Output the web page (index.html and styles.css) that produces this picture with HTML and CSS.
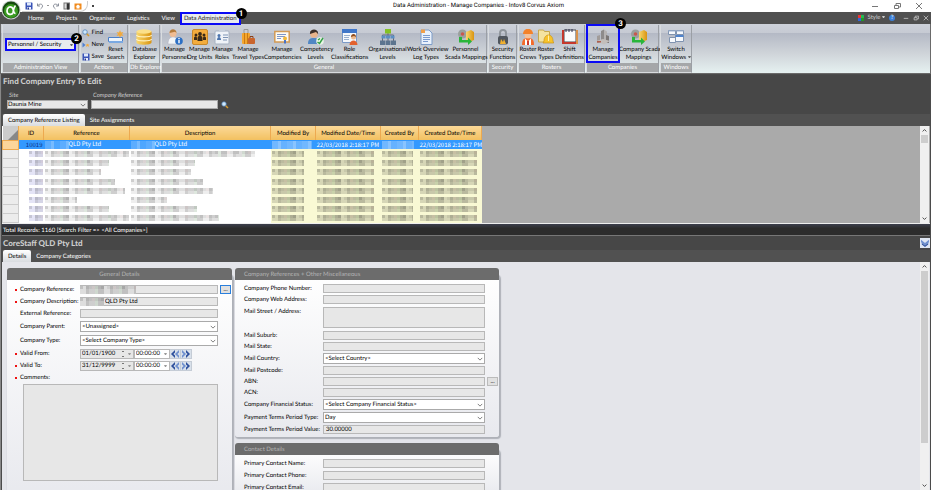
FILE: index.html
```html
<!DOCTYPE html>
<html lang="en">
<head>
    <meta charset="UTF-8">
    <meta name="viewport" content="width=device-width, initial-scale=1.0">
    <title>Data Administration - Manage Companies - Intov8 Corvus Axiom</title>
    <link rel="stylesheet" href="styles.css">
</head>
<body>
    <svg class="sprite" aria-hidden="true">
        <linearGradient id="gold" x1="0" x2="1"><stop offset="0" stop-color="#f9d76b"/><stop offset="1" stop-color="#d99411"/></linearGradient>
        <symbol id="i-save" viewBox="0 0 16 16"><path fill="#3a54b8" d="M1 1h13l1 1v13H1z"/><path fill="#dfe8fa" d="M4 1h8v6H4z"/><path fill="#eef" d="M4 10h8v5H4z"/><path fill="#223a8c" d="M5 11h3v4H5z"/></symbol>
        <symbol id="i-undo" viewBox="0 0 16 16"><path fill="none" stroke="#8a8f9a" stroke-width="2" d="M3 3v5h5M3 8c3-5 10-5 10 0 0 3-2 4-4 6"/></symbol>
        <symbol id="i-redo" viewBox="0 0 16 16"><path fill="none" stroke="#8a8f9a" stroke-width="2" d="M13 3v5H8M13 8C10 3 3 3 3 8c0 3 2 4 4 6"/></symbol>
        <symbol id="i-door" viewBox="0 0 16 16"><path fill="#777" d="M1 1h13v14H1z"/><path fill="#ddd" d="M3 3h4v10H3z"/><path fill="#333" d="M8 3h4v12H8z"/></symbol>
        <symbol id="i-home" viewBox="0 0 16 16"><path fill="#f08a1c" d="M1 3h14v12H1z"/><path fill="#fff" d="M8 5l5 4h-2v4H5V9H3z"/></symbol>
        <symbol id="i-find" viewBox="0 0 16 16"><path stroke="#d79a2b" stroke-width="3" d="M9 9l5 5"/><circle cx="6" cy="6" r="4.500" fill="#cfe8fb" stroke="#4d7fb5" stroke-width="1.500"/></symbol>
        <symbol id="i-new" viewBox="0 0 16 16"><path fill="#4f7fd0" d="M1 3l6 5-6 5z"/><path fill="#f3a93a" d="M11 5l1 2h3l-2 2 1 3-3-2-3 2 1-3-2-2h3z"/></symbol>
        <symbol id="i-reset" viewBox="0 0 16 16"><path fill="#eef4fb" stroke="#4a7fc9" d="M.5 8.500h14v4H.5z"/><path fill="#7aa9e2" d="M1 12h14v2H1z"/><path fill="#f2a93b" d="M12 1l1 2.500 2.500-.5-1.500 2 1.500 2-2.500-.5-1 2.500-1-2.500-2.500.5 1.500-2-1.500-2 2.500.5z"/></symbol>
        <symbol id="i-db" viewBox="0 0 16 16"><path fill="url(#gold)" d="M.5 2.500h15v11c0 3-15 3-15 0z"/><ellipse cx="8" cy="2.500" rx="7.500" ry="2.200" fill="#fbe08a"/><path fill="none" stroke="#fff3c4" stroke-width="1.200" d="M.5 6c0 2.500 15 2.500 15 0M.5 10c0 2.500 15 2.500 15 0"/></symbol>
        <symbol id="i-person" viewBox="0 0 16 16"><path fill="#f2f5f8" stroke="#aab" stroke-width=".5" d="M1 15c0-5 2-7 5-7s6 2 6 7z"/><circle cx="6" cy="4.500" r="3.500" fill="#f0bd94"/><path fill="#b57c3c" d="M2.500 4c0-5 7-5 7 0L8 2.800z"/><circle cx="12" cy="12" r="3.800" fill="#2c6fc4"/><path stroke="#fff" stroke-width="1.400" d="M12 9v1.300M12 11v3.300"/></symbol>
        <symbol id="i-org" viewBox="0 0 16 16"><rect x=".5" y=".5" width="15" height="15" rx="1.500" fill="#f3ac3d" stroke="#c98a2c"/><g fill="#3a2a17"><circle cx="8" cy="5" r="1.900"/><circle cx="4" cy="6" r="1.500"/><circle cx="12" cy="6" r="1.500"/><path d="M5.500 12V9c0-3 5-3 5 0v3zM2 11V9c0-2 3-2 3 0v2zM11 11V9c0-2 3-2 3 0v2z"/></g></symbol>
        <symbol id="i-roles" viewBox="0 0 16 16"><rect x="1" y="2" width="14" height="13" rx="1" fill="#eff3f8" stroke="#a6b2c2"/><path fill="#c6cfdb" d="M5 0h6v3H5z"/><circle cx="5" cy="6.500" r="1.500" fill="#4c74ad"/><path fill="#4c74ad" d="M3 11c0-4 4-4 4 0z"/><path stroke="#7e95b5" d="M9 6h5M9 8.500h5M9 11h4"/></symbol>
        <symbol id="i-travel" viewBox="0 0 16 16"><path fill="none" stroke="#999" d="M4 4V.5h4V4"/><rect x="2" y="4" width="8" height="11" rx="1" fill="#f4a62f"/><path stroke="#c97b13" d="M4.500 4v11M7.500 4v11"/><rect x="8" y="9" width="7" height="6" rx="1" fill="#c9652e"/><path fill="none" stroke="#8b3f18" d="M10 9V7.500h3V9"/></symbol>
        <symbol id="i-cert" viewBox="0 0 16 16"><path fill="#fdfbf3" stroke="#d29a55" stroke-width="1.500" d="M.8 2.500h14.400v10.500H.8z"/><path stroke="#7f97c7" d="M3 5.500h9M3 7.500h8M3 9.500h4"/><circle cx="11" cy="9.500" r="2" fill="#f2b93b"/><path fill="#4a73c4" d="M10 11h2v4l-1-1-1 1z"/></symbol>
        <symbol id="i-comp" viewBox="0 0 16 16"><path fill="#5187c4" d="M0 15c0-5 2-6 6-6s5 2 5 6z"/><circle cx="6" cy="5" r="3.800" fill="#e8b48b"/><path fill="#3c3029" d="M2 5c-1-6 9-6 8 0L8 3z"/><circle cx="12" cy="12" r="3.800" fill="#e9f6e6"/><path fill="none" stroke="#34a047" stroke-width="1.500" d="M9.500 13l2 1.500L15 9M10 11l2-1.500"/></symbol>
        <symbol id="i-class" viewBox="0 0 16 16"><path fill="#f5f8fc" stroke="#7c9ac7" d="M.5.5h14v13H.5z"/><path fill="#3f76c9" d="M0 0h15v4H0z"/><path stroke="#9ab0d0" d="M2 6.500h6M2 8.500h5M2 10.500h5"/><circle cx="11.500" cy="8" r="2.500" fill="#efb98b"/><path fill="#8d4c1e" d="M9 8c0-4 5-4 5 0l-2-1z"/><path fill="#e2612d" d="M7.500 16c0-6 8-6 8 0z"/></symbol>
        <symbol id="i-tree" viewBox="0 0 16 16"><path fill="none" stroke="#667" d="M8 4v8M2.500 12V6h11v6"/><path fill="#84c225" d="M5 0h6v4.500H5z"/><path fill="#5b8fc4" d="M1.500 6.500h4v3h-4zM6 6.500h4v3H6zM10.500 6.500h4v3h-4z"/><path fill="#5c748f" d="M0 11.500h5V16H0zM5.500 11.500h5V16h-5zM11 11.500h5V16h-5z"/></symbol>
        <symbol id="i-doc" viewBox="0 0 16 16"><path fill="#e9f1fc" stroke="#7d9cc8" d="M3 1h8l3 3v11.500H3z"/><path fill="#f0a04c" d="M3 .5h4V4H3z"/><path stroke="#7a9bd0" d="M5 6.500h7M5 8.500h7M5 10.500h7M5 12.500h5"/></symbol>
        <symbol id="i-scada" viewBox="0 0 16 16"><circle cx="4.500" cy="5" r="4.500" fill="#9a9f9d"/><circle cx="4.500" cy="5" r="1.800" fill="#c9574c"/><path fill="url(#gold)" d="M8 3l5-2 3 2v8l-5 2-3-2z"/><path fill="#29b53a" d="M1 8h3v3h6V8.500l4 4-4 3.500v-2.500H1z"/></symbol>
        <symbol id="i-lock" viewBox="0 0 16 16"><path fill="none" stroke="#8f959c" stroke-width="2" d="M5 8V4c0-4 6-4 6 0v4"/><rect x="3" y="7" width="10" height="8.500" rx="2" fill="#50565e"/><path fill="#f0b030" d="M5 15l1-5 2 3 1-3 2 5z"/></symbol>
        <symbol id="i-crew" viewBox="0 0 16 16"><path fill="#f36b2b" d="M2 16c0-6 2-7 6-7s6 1 6 7z"/><path fill="#fff" d="M5 9.500l3 3 3-3v6.500H5z"/><circle cx="8" cy="6" r="3.500" fill="#f4c19b"/><path fill="#f3822b" d="M3 5c0-7 10-7 10 0z"/><path fill="#d03b2a" d="M7 12h2v4H7z"/></symbol>
        <symbol id="i-hat" viewBox="0 0 16 16"><path fill="#f4e3a0" stroke="#c7a84c" d="M.5 1h5l1 1.500h5V13H.5z"/><path fill="#f7c32b" stroke="#c8921a" stroke-width=".7" d="M6 12c0-8 9-8 9 0l.7 2H5z"/><path stroke="#fff0a8" d="M10.500 6.500V12"/></symbol>
        <symbol id="i-shift" viewBox="0 0 16 16"><path fill="#fbfbfb" stroke="#44484f" d="M2 1h12v12H2z"/><path fill="#c5372b" d="M0 13h16v2H0zM0 1h2v14H0z"/><path fill="#d9924a" d="M14 1h2v14h-2z"/><path stroke="#335" d="M4 0v3M7 0v3M10 0v3"/></symbol>
        <symbol id="i-city" viewBox="0 0 16 16"><path fill="#8e8b8b" d="M6 2l3-1.500V14H6z"/><path fill="#b6b3b3" d="M9 .5l3 2V14H9z"/><path fill="#a19c9a" d="M2 7l3-1v8H2z"/><path fill="#7d7877" d="M11 6l3 1v7h-3z"/><path fill="#c3bebb" d="M1 12l7-2 7 2-6 3.500z"/><path fill="#b05d4c" d="M2 12h4v1.500H2z"/></symbol>
        <symbol id="i-switch" viewBox="0 0 16 16"><g fill="#f6f9fd" stroke="#7f93b0"><path d="M.5 1.500h7v4h-7zM8.500 1.500h7v4h-7zM1.500 8.500h6v5h-6z"/><path d="M7.500 6.500h8v6h-8z"/></g><path fill="#4f83cc" d="M7.500 6h8v2h-8z"/><path fill="#9db3d1" d="M.5 1.500h7v1h-7zM8.500 1.500h7v1h-7z"/></symbol>
        <symbol id="i-chev" viewBox="0 0 8 8"><path fill="none" stroke="#555" d="M1 2.500l3 3 3-3"/></symbol>
        <symbol id="i-up" viewBox="0 0 8 8"><path fill="none" stroke="#444" stroke-width="1.500" d="M1 5.500l3-3 3 3"/></symbol>
        <symbol id="i-down" viewBox="0 0 8 8"><path fill="none" stroke="#444" stroke-width="1.500" d="M1 2.500l3 3 3-3"/></symbol>
        <symbol id="i-prev" viewBox="0 0 10 10"><path fill="#2c4f9c" d="M5 0L0 5l5 5V7L3 5l2-2z"/><path fill="#6f90cf" d="M10 0L5 5l5 5V7L8 5l2-2z"/></symbol>
        <symbol id="i-next" viewBox="0 0 10 10"><path fill="#6f90cf" d="M0 0l5 5-5 5V7l2-2-2-2z"/><path fill="#2c4f9c" d="M5 0l5 5-5 5V7l2-2-2-2z"/></symbol>
        <symbol id="i-min" viewBox="0 0 8 8"><path stroke="currentColor" d="M1 4.500h6"/></symbol>
        <symbol id="i-restore" viewBox="0 0 8 8"><path fill="none" stroke="currentColor" d="M1.500 3.500h4v3h-4zM3 3V1.500h4.500V5H6"/></symbol>
        <symbol id="i-close" viewBox="0 0 8 8"><path stroke="currentColor" d="M1 1l6 6M7 1L1 7"/></symbol>
    </svg>

    <header class="titlebar">
        <div class="quick">
            <svg><use href="#i-save"/></svg>
            <svg><use href="#i-undo"/></svg>
            <i class="dot"></i>
            <svg><use href="#i-redo"/></svg>
            <svg><use href="#i-door"/></svg>
            <svg><use href="#i-home"/></svg>
        </div>
        <i class="dot dark"></i>
        <h1>Data Administration - Manage Companies - Intov8 Corvus Axiom</h1>
        <div class="window-buttons">
            <button aria-label="Minimise"><svg><use href="#i-min"/></svg></button>
            <button aria-label="Restore"><svg><use href="#i-restore"/></svg></button>
            <button aria-label="Close"><svg><use href="#i-close"/></svg></button>
        </div>
        <button class="orb" aria-label="Application menu">
            <svg viewBox="0 0 20 20"><circle cx="10" cy="10" r="9.500" fill="#c9cdcf"/><circle cx="10" cy="10" r="8.500" fill="#174a10"/><circle cx="10" cy="11" r="7" fill="#3a9a22"/><path fill="none" stroke="#fff" stroke-width="1.700" d="M14.500 5.500c-2 2-2 5-2.500 7-1 3-6 2.500-6-1.500s3-5 5-3.500 1 6 3.500 6"/></svg>
        </button>
    </header>

    <nav class="menu">
        <a href="#">Home</a>
        <a href="#">Projects</a>
        <a href="#">Organiser</a>
        <a href="#">Logistics</a>
        <a href="#">View</a>
        <a href="#" class="active marked">Data Administration<span class="callout">1</span></a>
        <div class="menu-right">
            <svg viewBox="0 0 8 8"><path fill="#e33" d="M0 0h4v4H0z"/><path fill="#2b5" d="M4 0h4v4H4z"/><path fill="#36d" d="M0 4h4v4H0z"/><path fill="#292" d="M4 4h4v4H4z"/></svg>
            <button>Style <i class="arrow"></i></button>
            <button class="help" aria-label="Help">?</button>
            <button aria-label="Minimise child"><svg><use href="#i-min"/></svg></button>
            <button aria-label="Restore child"><svg><use href="#i-restore"/></svg></button>
            <button aria-label="Close child"><svg><use href="#i-close"/></svg></button>
        </div>
    </nav>

    <div class="ribbon">
        <section class="group g-admin">
            <div class="tools">
                <div class="combo marked">
                    <select aria-label="Administration view"><option>Personnel / Security</option></select>
                    <i class="arrow"></i>
                    <span class="callout">2</span>
                </div>
            </div>
            <h2>Administration View</h2>
        </section>
        <section class="group g-actions">
            <div class="tools">
                <div class="small-tools">
                    <button><svg><use href="#i-find"/></svg>Find</button>
                    <button><svg><use href="#i-new"/></svg>New</button>
                    <button><svg><use href="#i-save"/></svg>Save</button>
                </div>
                <button class="tool"><svg><use href="#i-reset"/></svg>Reset<br>Search</button>
            </div>
            <h2>Actions</h2>
        </section>
        <section class="group g-db">
            <div class="tools">
                <button class="tool"><svg><use href="#i-db"/></svg>Database<br>Explorer</button>
            </div>
            <h2>Db Explorer</h2>
        </section>
        <section class="group g-general">
            <div class="tools">
                <button class="tool"><svg><use href="#i-person"/></svg>Manage<br>Personnel</button>
                <button class="tool"><svg><use href="#i-org"/></svg>Manage<br>Org Units</button>
                <button class="tool"><svg><use href="#i-roles"/></svg>Manage<br>Roles</button>
                <button class="tool"><svg><use href="#i-travel"/></svg>Manage<br>Travel Types</button>
                <button class="tool"><svg><use href="#i-cert"/></svg>Manage<br>Competencies</button>
                <button class="tool"><svg><use href="#i-comp"/></svg>Competency<br>Levels</button>
                <button class="tool"><svg><use href="#i-class"/></svg>Role<br>Classifications</button>
                <button class="tool"><svg><use href="#i-tree"/></svg>Organisational<br>Levels</button>
                <button class="tool"><svg><use href="#i-doc"/></svg>Work Overview<br>Log Types</button>
                <button class="tool"><svg><use href="#i-scada"/></svg>Personnel<br>Scada Mappings</button>
            </div>
            <h2>General</h2>
        </section>
        <section class="group g-security">
            <div class="tools">
                <button class="tool"><svg><use href="#i-lock"/></svg>Security<br>Functions</button>
            </div>
            <h2>Security</h2>
        </section>
        <section class="group g-rosters">
            <div class="tools">
                <button class="tool"><svg><use href="#i-crew"/></svg>Roster<br>Crews</button>
                <button class="tool"><svg><use href="#i-hat"/></svg>Roster<br>Types</button>
                <button class="tool"><svg><use href="#i-shift"/></svg>Shift<br>Definitions</button>
            </div>
            <h2>Rosters</h2>
        </section>
        <section class="group g-companies">
            <div class="tools">
                <button class="tool marked"><svg><use href="#i-city"/></svg>Manage<br>Companies<span class="callout">3</span></button>
                <button class="tool"><svg><use href="#i-scada"/></svg>Company Scada<br>Mappings</button>
            </div>
            <h2>Companies</h2>
        </section>
        <section class="group g-windows">
            <div class="tools">
                <button class="tool"><svg><use href="#i-switch"/></svg>Switch<br>Windows <i class="arrow"></i></button>
            </div>
            <h2>Windows</h2>
        </section>
    </div>

    <main>
        <section class="find">
            <h2 class="heading">Find Company Entry To Edit</h2>
            <form class="search">
                <label for="site">Site</label>
                <label for="company-search">Company Reference</label>
                <div class="combo">
                    <select id="site"><option>Daunia Mine</option></select>
                    <svg><use href="#i-chev"/></svg>
                </div>
                <input type="text" id="company-search">
                <button type="button" aria-label="Search"><svg><use href="#i-find"/></svg></button>
            </form>
        </section>
        <div class="tabs">
            <button class="active">Company Reference Listing</button>
            <button>Site Assignments</button>
        </div>
        <div class="listing">
            <table>
                <colgroup><col class="c-head"><col class="c-id"><col class="c-ref"><col class="c-desc"><col class="c-by"><col class="c-date"><col class="c-cby"><col class="c-cdate"></colgroup>
                <thead>
                    <tr><th class="corner"></th><th>ID</th><th>Reference</th><th>Description</th><th>Modified By</th><th>Modified Date/Time</th><th>Created By</th><th>Created Date/Time</th></tr>
                </thead>
                <tbody id="rows">
                    <tr class="selected">
                        <td></td><td class="id">10019</td>
                        <td><span class="mask blue w24"></span>QLD Pty Ltd</td>
                        <td><span class="mask blue w24"></span>QLD Pty Ltd</td>
                        <td><span class="mask blue w40"></span></td><td>22/03/2018 2:18:17 PM</td>
                        <td><span class="mask blue w32"></span></td><td>22/03/2018 2:18:17 PM</td>
                    </tr>
                </tbody>
            </table>
            <div class="scroll"><svg><use href="#i-up"/></svg><i class="thumb"></i><svg><use href="#i-down"/></svg></div>
        </div>
        <div class="status">Total Records: 1160 [Search Filter =&gt; &lt;All Companies&gt;]</div>
        <div class="company">
            <h2 class="heading">CoreStaff QLD Pty Ltd</h2>
            <button aria-label="Collapse"><svg viewBox="0 0 10 10"><path fill="#6f90cf" d="M0 1l5 4 5-4v3L5 8 0 4z"/><path fill="#2c4f9c" d="M1 5l4 3 4-3v2L5 10 1 7z"/></svg></button>
        </div>
        <div class="tabs">
            <button class="active">Details</button>
            <button>Company Categories</button>
        </div>
        <div class="details">
            <form class="panels">
                <fieldset class="panel general">
                    <legend>General Details</legend>
                    <div class="row req"><label for="ref">Company Reference:</label><div class="field"><span class="mask w56"></span><input type="text" id="ref"><button type="button" class="more focus">...</button></div></div>
                    <div class="row req"><label for="desc">Company Description:</label><div class="field"><span class="mask w24"></span><input type="text" id="desc" class="after-mask" value="QLD Pty Ltd"></div></div>
                    <div class="row"><label for="ext">External Reference:</label><div class="field"><input type="text" id="ext"></div></div>
                    <div class="row drop"><label for="parent">Company Parent:</label><div class="combo"><select id="parent"><option>&lt;Unassigned&gt;</option></select><svg><use href="#i-chev"/></svg></div></div>
                    <div class="row drop"><label for="type">Company Type:</label><div class="combo"><select id="type"><option>&lt;Select Company Type&gt;</option></select><svg><use href="#i-chev"/></svg></div></div>
                    <div class="row req"><label for="from">Valid From:</label>
                        <div class="dates">
                            <span class="date"><input type="text" id="from" value="01/01/1900"><i class="spin"></i><i class="arrow"></i></span>
                            <span class="time"><input type="text" aria-label="Valid from time" value="00:00:00"><i class="arrow"></i></span>
                            <button type="button" aria-label="Earliest"><svg><use href="#i-prev"/></svg></button><button type="button" aria-label="Latest"><svg><use href="#i-next"/></svg></button>
                        </div>
                    </div>
                    <div class="row req"><label for="to">Valid To:</label>
                        <div class="dates">
                            <span class="date"><input type="text" id="to" value="31/12/9999"><i class="spin"></i><i class="arrow"></i></span>
                            <span class="time"><input type="text" aria-label="Valid to time" value="00:00:00"><i class="arrow"></i></span>
                            <button type="button" aria-label="Earliest"><svg><use href="#i-prev"/></svg></button><button type="button" aria-label="Latest"><svg><use href="#i-next"/></svg></button>
                        </div>
                    </div>
                    <div class="row req"><label for="comments">Comments:</label></div>
                    <textarea id="comments"></textarea>
                </fieldset>
                <div class="column">
                    <fieldset class="panel misc">
                        <legend>Company References + Other Miscellaneous</legend>
                        <div class="row"><label for="phone">Company Phone Number:</label><div class="field"><input type="text" id="phone"></div></div>
                        <div class="row"><label for="web">Company Web Address:</label><div class="field"><input type="text" id="web"></div></div>
                        <div class="row tall"><label for="street">Mail Street / Address:</label><textarea id="street"></textarea></div>
                        <div class="row"><label for="suburb">Mail Suburb:</label><div class="field"><input type="text" id="suburb"></div></div>
                        <div class="row"><label for="state">Mail State:</label><div class="field"><input type="text" id="state"></div></div>
                        <div class="row drop"><label for="country">Mail Country:</label><div class="combo"><select id="country"><option>&lt;Select Country&gt;</option></select><svg><use href="#i-chev"/></svg></div></div>
                        <div class="row"><label for="postcode">Mail Postcode:</label><div class="field"><input type="text" id="postcode"></div></div>
                        <div class="row"><label for="abn">ABN:</label><div class="field"><input type="text" id="abn"><button type="button" class="more">...</button></div></div>
                        <div class="row"><label for="acn">ACN:</label><div class="field"><input type="text" id="acn"></div></div>
                        <div class="row drop"><label for="financial">Company Financial Status:</label><div class="combo"><select id="financial"><option>&lt;Select Company Financial Status&gt;</option></select><svg><use href="#i-chev"/></svg></div></div>
                        <div class="row drop"><label for="terms">Payment Terms Period Type:</label><div class="combo"><select id="terms"><option>Day</option></select><svg><use href="#i-chev"/></svg></div></div>
                        <div class="row"><label for="value">Payment Terms Period Value:</label><div class="field"><input type="text" id="value" value="30.00000"></div></div>
                    </fieldset>
                    <fieldset class="panel misc contact">
                        <legend>Contact Details</legend>
                        <div class="row"><label for="c-name">Primary Contact Name:</label><div class="field"><input type="text" id="c-name"></div></div>
                        <div class="row"><label for="c-phone">Primary Contact Phone:</label><div class="field"><input type="text" id="c-phone"></div></div>
                        <div class="row"><label for="c-email">Primary Contact Email:</label><div class="field"><input type="text" id="c-email"></div></div>
                    </fieldset>
                </div>
            </form>
            <div class="scroll long"><svg><use href="#i-up"/></svg><i class="thumb"></i><svg><use href="#i-down"/></svg></div>
        </div>
    </main>
    <script src="script.js"></script>
</body>
</html>
```
FILE: styles.css
```css
* {
    box-sizing: border-box;
}
html, body {
    height: 100%;
}
body {
    display: flex;
    flex-direction: column;
    margin: 0;
    overflow: hidden;
    background-color: #4b4b4b;
    color: #000;
    font-family: Lato, "Liberation Sans", Arial, sans-serif;
    font-size: 6px;
    line-height: 8px;
    text-rendering: geometricPrecision;
}
h1, h2 {
    margin: 0;
    font-size: 6px;
    font-weight: normal;
}
button, input, select, textarea {
    margin: 0;
    padding: 0;
    border: none;
    border-radius: 0;
    background: none;
    color: inherit;
    font: inherit;
    text-rendering: inherit;
    appearance: none;
}
a {
    color: inherit;
    text-decoration: none;
}
svg {
    display: block;
    width: 8px;
    height: 8px;
    flex: none;
}
.sprite {
    position: absolute;
    width: 0;
    height: 0;
}
.arrow {
    display: inline-block;
    border: 1px solid transparent;
    border-top: 2px solid #666;
    border-bottom: none;
    width: 3px;
    vertical-align: middle;
}
.marked {
    position: relative;
    outline: 2px solid #0a0af5;
    outline-offset: -1px;
}
.callout {
    position: absolute;
    top: -7px;
    right: -7px;
    z-index: 3;
    width: 11px;
    height: 11px;
    border-radius: 50%;
    background-color: #000;
    color: #fff;
    font-family: Roboto, "Liberation Sans", sans-serif;
    font-size: 8px;
    font-weight: bold;
    line-height: 11px;
    text-align: center;
}

/* title bar */
.titlebar {
    position: relative;
    display: flex;
    align-items: center;
    height: 12px;
    flex: none;
    padding-left: 22px;
    background-color: #fff;
}
.quick {
    display: flex;
    align-items: center;
    justify-content: space-between;
    width: 66px;
    height: 11px;
    padding: 0 5px 0 3px;
    border: 1px solid #ccc;
    border-left: none;
    border-top: none;
    border-radius: 0 0 8px 0;
}
.dot {
    width: 2px;
    height: 1px;
    background-color: #999;
}
.dot.dark {
    height: 2px;
    margin-left: 4px;
    background-color: #444;
}
.titlebar h1 {
    flex: 1;
    padding-right: 8px;
    font-family: Roboto, "Liberation Sans", sans-serif;
    text-align: center;
}
.window-buttons {
    display: flex;
    gap: 14px;
    margin-right: 8px;
    color: #777;
}
.orb {
    position: absolute;
    top: 0;
    left: 1px;
    z-index: 2;
}
.orb svg {
    width: 20px;
    height: 20px;
}

/* ribbon */
.menu {
    display: flex;
    align-items: center;
    height: 12px;
    flex: none;
    padding-left: 22px;
    background-color: #505050;
    color: #fff;
}
.menu a {
    padding: 3px 6px 1px;
}
.menu .active {
    height: 11px;
    margin: 0;
    padding: 2px 3px;
    background-color: #e9ebee;
    color: #222;
}
.menu .callout {
    top: -5px;
}
.menu-right {
    display: flex;
    align-items: center;
    gap: 4px;
    margin-left: auto;
    padding-right: 2px;
    color: #ccc;
}
.menu-right svg {
    width: 6px;
    height: 6px;
}
.menu-right .help {
    margin-right: 4px;
}
.menu-right .arrow {
    border-top-color: #ccc;
}
.help {
    width: 6px;
    height: 6px;
    border-radius: 50%;
    background-color: #3c7fd8;
    color: #fff;
    line-height: 6px;
}
.ribbon {
    display: flex;
    gap: 1px;
    height: 50px;
    flex: none;
    padding: 1px 1px 0;
    border: 1px solid #6a6a6a;
    border-width: 0 1px 1px;
    background: linear-gradient(#cdd1d9, #c6cad3 18%, #b4b9c5 19%, #cfd4d9 60%, #e6f1f1);
}
.group {
    display: flex;
    flex-direction: column;
    border: 1px solid #d9dcdf;
    border-top: none;
    border-right-color: #9b9fa5;
}
.group h2 {
    height: 9px;
    background-color: #a5a7a9;
    color: #fff;
    line-height: 10px;
    text-align: center;
    white-space: nowrap;
}
.tools {
    display: grid;
    flex: 1;
    align-items: start;
    justify-content: center;
}
.tool {
    display: flow-root;
    height: 37px;
    padding-top: 3px;
    line-height: 8px;
    text-align: center;
    white-space: nowrap;
}
.tool svg {
    width: 16px;
    height: 16px;
    margin: 0 auto 1px;
}
.small-tools button {
    display: flex;
    align-items: center;
    gap: 2px;
    height: 12px;
}
.g-admin {
    width: 77px;
}
.g-admin .combo {
    width: 69px;
    height: 11px;
    margin-top: 14px;
    padding: 1px 2px;
    background-color: #e9ebee;
}
.g-actions {
    width: 48px;
}
.g-actions .tools {
    grid-template-columns: 23px 22px;
}
.g-actions .small-tools {
    padding-top: 2px;
}
.g-db {
    width: 31px;
}
.g-general {
    width: 326px;
}
.g-general .tools {
    grid-template-columns: 25px 25px 20px 32px 36px 31px 37px 39px 38px 41px;
}
.g-security {
    width: 29px;
}
.g-rosters {
    width: 67px;
}
.g-rosters .tools {
    grid-template-columns: 18px 18px 29px;
}
.g-companies {
    width: 73px;
}
.g-companies .tools {
    grid-template-columns: 32px 39px;
}
.g-windows {
    width: 32px;
}

/* find panel */
main {
    display: flex;
    flex: 1;
    flex-direction: column;
    min-height: 0;
    padding: 1px 1px 0;
    border-left: 1px solid #888;
}
.heading {
    padding-left: 1px;
    color: #ccc;
    font-size: 8px;
    font-weight: 900;
    line-height: 13px;
}
.find {
    height: 39px;
    flex: none;
    background-color: #474747;
}
.search {
    display: grid;
    grid-template-columns: 81px 127px 10px;
    column-gap: 3px;
    padding: 4px 0 0 5px;
}
.search label {
    grid-row: 1;
    padding-left: 2px;
    color: #ccc;
    font-style: italic;
}
.search .combo, .search input, .search button {
    grid-row: 2;
    height: 9px;
}
.search input {
    background-color: #e8e8e8;
    border: 1px solid #aaa;
}
.combo {
    display: grid;
    align-items: center;
    background-color: #fff;
    border: 1px solid #aaa;
}
.combo > * {
    grid-area: 1 / 1;
}
.combo select {
    width: 100%;
    line-height: 8px;
}
.combo svg {
    width: 6px;
    height: 6px;
    justify-self: end;
    margin-right: 1px;
    pointer-events: none;
}
.combo .arrow {
    justify-self: end;
}
.search .combo {
    background-color: #e8e8e8;
}
.g-admin .combo {
    border: none;
}
.tabs {
    display: flex;
    height: 12px;
    flex: none;
    padding-left: 1px;
    background-color: #515151;
    color: #fff;
}
.tabs button {
    height: 12px;
    padding: 1px 5px 0;
    border-radius: 2px 2px 0 0;
}
.tabs .active {
    background: linear-gradient(#fff, #d9dce0);
    color: #000;
}

/* listing */
.listing {
    display: flex;
    justify-content: space-between;
    height: 98px;
    flex: none;
    background-color: #aaa;
    border-bottom: 1px solid #eee;
}
table {
    width: 479px;
    height: 97px;
    border-collapse: collapse;
    table-layout: fixed;
    background-color: #fff;
}
.c-head { width: 16px; }
.c-id { width: 25px; }
.c-ref { width: 86px; }
.c-desc { width: 141px; }
.c-by { width: 45px; }
.c-date { width: 65px; }
.c-cby { width: 38px; }
.c-cdate { width: 63px; }
th {
    height: 14px;
    padding: 1px 0 0;
    border-right: 1px solid #eda94f;
    background: linear-gradient(#fbd998, #f2c060);
    font-weight: normal;
}
th.corner {
    background: linear-gradient(135deg, #ccc 65%, #888 66%);
}
td {
    height: 9px;
    padding: 0 0 0 1px;
    overflow: hidden;
    font-family: "Noto Sans CJK SC", "Liberation Sans", sans-serif;
    line-height: 8px;
    white-space: nowrap;
}
td:first-child {
    background-color: #ececec;
    border: 1px solid #ccc;
}
td:nth-child(n+5) {
    background-color: #f9f9d4;
}
td.id {
    padding-right: 1px;
    color: #123a9a;
    text-align: right;
}
.selected td {
    background-color: #3399ff;
    color: #fff;
}
.selected td.id {
    color: #0a2f86;
}
.selected td:first-child {
    background-color: #fcd59a;
    border-color: #eda94f;
}
/* blocks over private values */
.mask {
    display: inline-block;
    height: 6px;
    vertical-align: middle;
    background:
        repeating-linear-gradient(90deg, #0002 0 3px, #0000 3px 6px, #0001 6px 12px, #a441 12px 15px, #0001 15px 21px) 0 0 / 100% 3px no-repeat,
        repeating-linear-gradient(90deg, #0000 0 6px, #0002 6px 9px, #0001 9px 15px, #0801 15px 18px, #0002 18px 24px),
        #0001;
}
.mask.blue {
    height: 8px;
    background: repeating-linear-gradient(90deg, #fff3 0 6px, #fff5 6px 9px, #fff2 9px 15px);
}
td.id .mask {
    background-color: #33b2;
}
td:nth-child(n+5) .mask {
    background-color: #7764;
}
.selected td:nth-child(n+5) .mask {
    background-color: #fff2;
}
.w24 { width: 24px; }
.w32 { width: 32px; }
.w40 { width: 40px; }
.w56 { width: 56px; }
.scroll {
    display: flex;
    flex-direction: column;
    align-items: center;
    width: 9px;
    margin-right: 1px;
    padding: 2px 0;
    background-color: #f0f0f0;
}
.scroll svg {
    width: 5px;
    height: 5px;
}
.thumb {
    width: 7px;
    height: 8px;
    margin: 2px 0 auto;
    background-color: #cdcdcd;
}
.status {
    height: 12px;
    flex: none;
    padding-left: 1px;
    background: linear-gradient(#3c3f4c, #2c2c2c 40%);
    border-bottom: 1px solid #777;
    color: #fff;
    line-height: 13px;
}
.company {
    display: flex;
    align-items: center;
    justify-content: space-between;
    height: 14px;
    flex: none;
    background-color: #474747;
}
.company button {
    padding: 1px;
    background-color: #dfe6f2;
}

/* details */
.details {
    display: flex;
    flex: 1;
    justify-content: space-between;
    min-height: 0;
    background-color: #e4e5ea;
}
.panels {
    display: grid;
    grid-template-columns: 225px 264px;
    gap: 3px;
    min-height: 0;
    padding: 6px 0 0 5px;
}
.column {
    display: flex;
    flex-direction: column;
    gap: 6px;
}
.panel {
    margin: 0;
    min-width: 0;
    padding: 0 0 2px;
    border: none;
    border-radius: 4px 4px 3px 3px;
    background: linear-gradient(#fff, #e8e9ee);
    box-shadow: 1px 1px 1px 1px #aeb1b8;
}
.panel legend {
    display: block;
    width: 100%;
    height: 12px;
    padding: 0 9px;
    border-radius: 3px 3px 0 0;
    background-color: #6c6c6c;
    color: #b4b4b4;
    line-height: 13px;
}
.general {
    display: flex;
    flex-direction: column;
    height: 230px;
}
.general legend {
    margin-bottom: 4px;
    text-align: center;
}
.misc legend {
    margin-bottom: 3px;
}
.row {
    display: grid;
    grid-template-columns: 60px 138px;
    align-items: center;
    height: 11px;
    margin: 0 0 1px 13px;
}
.misc .row {
    grid-template-columns: 79px 162px;
    margin: 0 0 0 9px;
}
.contact .row {
    margin-bottom: 1px;
}
.row.drop {
    height: 13px;
}
.misc .row.tall {
    align-items: start;
    height: 25px;
    padding: 2px 0;
}
.row label {
    position: relative;
    padding-top: 1px;
    white-space: nowrap;
}
.req label::before {
    content: "";
    position: absolute;
    top: 4px;
    left: -5px;
    width: 2px;
    height: 2px;
    background-color: #e11;
}
.field {
    display: flex;
    position: relative;
    align-items: center;
    height: 9px;
}
.panel input, .panel textarea {
    width: 100%;
    height: 9px;
    flex: none;
    padding: 0 2px;
    border: 1px solid #b8b8b8;
    background-color: #e7e7e7;
    resize: none;
}
.panel .tall textarea {
    height: 21px;
}
.panel #comments {
    width: 195px;
    height: 97px;
    margin-left: 16px;
}
.panel .after-mask {
    padding-left: 24px;
}
.field .mask {
    position: absolute;
    left: 0;
    height: 8px;
    background-color: #ddd;
}
.more {
    width: 11px;
    height: 9px;
    flex: none;
    margin-left: 2px;
    border: 1px solid #bbb;
    background-color: #e1e1e1;
    line-height: 5px;
}
.more.focus {
    border-color: #2a7fdc;
}
.row .combo {
    height: 11px;
}
.row select {
    padding-left: 1px;
}
.dates {
    display: flex;
    height: 10px;
}
.date, .time {
    display: flex;
    align-items: center;
    gap: 4px;
    padding-right: 2px;
    border: 1px solid #b8b8b8;
    background-color: #e7e7e7;
}
.date {
    width: 54px;
}
.time {
    gap: 0;
    width: 36px;
    background-color: #fff;
}
.panel .dates input {
    width: auto;
    flex: 1;
    min-width: 0;
    height: 8px;
    padding: 0 1px;
    border: none;
    background: none;
}
.dates .arrow {
    border-top-color: #999;
}
.spin {
    width: 2px;
    height: 6px;
    border: 1px solid #777;
    border-width: 1px 0;
}
.dates button {
    padding: 0 1px;
    border: 1px solid #c5ccd6;
    border-left: none;
    background-color: #d8e0ea;
}
.dates svg {
    width: 8px;
    height: 8px;
}
.long .thumb {
    height: 172px;
}
```
FILE: script.js
```js
// widths of the masked reference and description on each row
const rows = [
    [84, 124], [64, 64], [56, 60], [70, 72], [80, 82], [32, 36], [64, 66], [84, 88]
];

const body = document.getElementById('rows');

function mask(width) {
    return `<span class="mask" style="width: ${width}px"></span>`;
}

rows.forEach(([ref, desc]) => {
    const tr = document.createElement('tr');
    tr.innerHTML = `<td></td><td class="id">${mask(14)}</td><td>${mask(ref)}</td><td>${mask(desc)}</td>` +
        `<td>${mask(32)}</td><td>${mask(57)}</td><td>${mask(31)}</td><td>${mask(57)}</td>`;
    body.appendChild(tr);
});
```
